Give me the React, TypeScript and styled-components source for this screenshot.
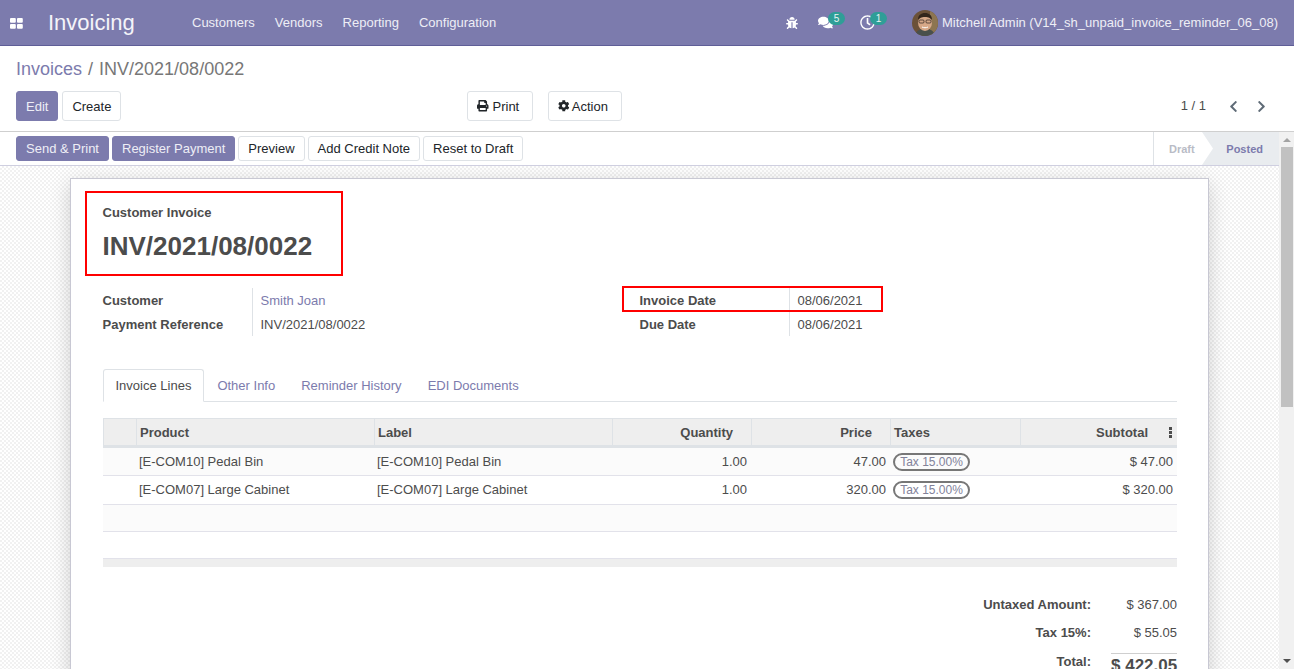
import React from "react";
import styled, { createGlobalStyle } from "styled-components";
import { FaBug, FaComments, FaRegClock, FaPrint, FaCog, FaChevronLeft, FaChevronRight } from "react-icons/fa";

const Global = createGlobalStyle`
  html, body { margin: 0; padding: 0; height: 100%; overflow: hidden; }
  body { font-family: "Liberation Sans", Arial, sans-serif; font-size: 13px; color: #4c4c4c; background: #fff; }
  * { box-sizing: border-box; }
`;

const Page = styled.div`
  display: flex; flex-direction: column; height: 669px; width: 1294px; overflow: hidden;
`;
const Navbar = styled.header`
  flex: none; height: 46px; background: #7c7bad; border-bottom: 1px solid #5f5e97;
  display: flex; align-items: center; color: #fff; padding-right: 16px;
`;
const AppsIcon = styled.svg`
  width: 13px; height: 11px; margin-left: 10px; margin-top: 1px; flex: none; fill: #fff;
`;
const Brand = styled.div`
  font-size: 22px; margin-left: 25px; width: 144px; flex: none; color: #f4f4f9; margin-top: 1px;
`;
const MenuLink = styled.a`
  font-size: 13px; margin-right: 20px; color: #eeeef6;
`;
const NavRight = styled.div`
  margin-left: auto; display: flex; align-items: center;
`;
const IconSlot = styled.span<{ $w: number }>`
  position: relative; display: flex; align-items: center; width: ${p => p.$w}px; color: #fff; font-size: 14px;
`;
const Badge = styled.span`
  position: absolute; left: 10px; top: -3px; height: 13px; min-width: 17px; padding: 0 5px;
  border-radius: 7px; background: #2f9e97; color: #e8f4f3; font-size: 10px; line-height: 13px; text-align: center;
`;
const Avatar = styled.svg`
  width: 26px; height: 26px; border-radius: 50%; flex: none; margin-right: 4px;
`;
const UserName = styled.span`
  font-size: 13px; color: #eeeef6; white-space: nowrap;
`;

const ControlPanel = styled.div`
  flex: none; height: 86px; border-bottom: 1px solid #cfcfcf; background: #fff;
  padding: 12px 16px 0; display: flex; flex-direction: column;
`;
const Crumbs = styled.div`
  font-size: 18px; line-height: 23px; color: #777; height: 33px; display: flex; gap: 6px;
`;
const CrumbLink = styled.a`
  color: #7c7bad;
`;
const CpRow = styled.div`
  display: flex; align-items: flex-start;
`;
const CpLeft = styled.div`
  width: 451px; display: flex; gap: 4px; flex: none;
`;
const CpMiddle = styled.div`
  display: flex; gap: 15px;
`;
const Btn = styled.button<{ $primary?: boolean; $small?: boolean; $caret?: boolean }>`
  font-family: inherit; font-size: 13px; height: ${p => (p.$small ? 25 : 30)}px;
  padding: 0 ${p => (p.$caret ? 13 : 9)}px 0 9px; border-radius: 3px;
  border: 1px solid ${p => (p.$primary ? "#7c7bad" : "#dee2e6")};
  background: ${p => (p.$primary ? "#7c7bad" : "#fff")};
  color: ${p => (p.$primary ? "#eeeef6" : "#212529")};
  display: inline-flex; align-items: center; gap: 4px; white-space: nowrap;
  svg { font-size: 11.5px; }
`;
const CogIcon = styled(FaCog)`
  margin-right: -2px;
`;
const Pager = styled.div`
  margin-left: auto; display: flex; align-items: center; height: 30px; color: #4c4c4c; padding-right: 10px;
  svg { font-size: 13px; color: #5f6b77; }
`;
const PagerText = styled.span`
  margin-right: 21px; margin-top: -2px;
`;
const PagerGap = styled.span`
  width: 15px;
`;

const Body = styled.div`
  flex: 1; display: flex; min-height: 0;
`;
const Content = styled.div`
  flex: 1; display: flex; flex-direction: column; min-width: 0;
`;
const Scrollbar = styled.div`
  width: 15px; flex: none; background: #f1f1f1; display: flex; flex-direction: column; align-items: center; padding-top: 6px;
`;
const ArrowUp = styled.span`
  width: 0; height: 0; border-left: 4px solid transparent; border-right: 4px solid transparent; border-bottom: 4px solid #a3a3a3;
`;
const ArrowDown = styled.span`
  width: 0; height: 0; border-left: 4px solid transparent; border-right: 4px solid transparent; border-top: 4px solid #505050; margin-top: auto; margin-bottom: 6px;
`;
const Thumb = styled.span`
  width: 12px; height: 260px; margin-top: 5px; background: #c1c1c1;
`;
const StatusBar = styled.div`
  flex: none; height: 34px; border-bottom: 1px solid #cfcfe0; background: #fff;
  display: flex; align-items: flex-start; padding-left: 16px;
`;
const StatusActions = styled.div`
  display: flex; gap: 3px; padding-top: 4px;
`;
const Steps = styled.div`
  margin-left: auto; display: flex; height: 33px; border-left: 1px solid #dee2e6;
  font-size: 11px; font-weight: 700;
`;
const StepDraft = styled.div`
  width: 48px; color: #b9bcc6; display: flex; align-items: center; padding-left: 15px;
`;
const StepPosted = styled.div`
  width: 77px; background: #e9ecef; color: #7c7bad; display: flex; align-items: center; justify-content: flex-end; padding-right: 16px;
  clip-path: polygon(0 0, 100% 0, 100% 100%, 0 100%, 11px 50%);
`;

const Main = styled.div`
  flex: 1; min-height: 0; overflow: hidden; padding-top: 12px;
  background-color: #fff;
  background-image: repeating-conic-gradient(#f1f1f1 0 25%, #fff 0 50%);
  background-size: 4px 4px;
`;
const Sheet = styled.div`
  position: relative; width: 1139px; margin-left: 70px; min-height: 560px; background: #fff;
  border: 1px solid #c8c8d3; padding: 26px 31px 0 31.5px;
  box-shadow: 0 5px 20px -1px rgba(0, 0, 0, 0.2);
`;
const Highlight = styled.div<{ $l: number; $t: number; $w: number; $h: number }>`
  position: absolute; left: ${p => p.$l}px; top: ${p => p.$t}px; width: ${p => p.$w}px; height: ${p => p.$h}px;
  border: 2px solid #f00; pointer-events: none;
`;
const TypeLabel = styled.div`
  font-size: 13px; font-weight: 700; line-height: 15px;
`;
const Title = styled.h1`
  font-size: 26px; font-weight: 700; line-height: 30px; margin: 11px 0 0; color: #4c4c4c;
`;
const Groups = styled.div`
  display: flex; margin-top: 27px;
`;
const Group = styled.div<{ $w: number }>`
  width: ${p => p.$w}px; flex: none; display: grid; grid-template-columns: 150px auto; grid-auto-rows: 24px; justify-content: start;
`;
const FieldLabel = styled.div`
  font-weight: 700; display: flex; align-items: center; border-right: 1px solid #dee2e6;
`;
const FieldValue = styled.div<{ $link?: boolean }>`
  display: flex; align-items: center; padding-left: 8px; color: ${p => (p.$link ? "#7c7bad" : "#4c4c4c")};
`;
const Tabs = styled.div`
  display: flex; margin-top: 33px; height: 33px; border-bottom: 1px solid #dee2e6;
`;
const Tab = styled.div<{ $active?: boolean }>`
  padding: 0 12px; height: 33px; display: flex; align-items: center; border: 1px solid ${p => (p.$active ? "#dee2e6" : "transparent")};
  border-bottom-color: ${p => (p.$active ? "#fff" : "transparent")}; border-radius: 3px 3px 0 0;
  color: ${p => (p.$active ? "#4c4c4c" : "#7c7bad")}; background: ${p => (p.$active ? "#fff" : "transparent")};
`;
const LinesTable = styled.div`
  margin-top: 16px; margin-left: 0.5px; display: flex; flex-direction: column;
`;
const columns = "33px 238px 238px 139px 139px 130px 157px";
const HeadRow = styled.div`
  display: grid; grid-template-columns: ${columns}; height: 30px; background: #eee;
  border-top: 1px solid #dee2e6; border-bottom: 3px solid #dee2e6; font-weight: 700;
`;
const HeadCell = styled.div<{ $right?: number }>`
  position: relative; display: flex; align-items: center; border-left: 1px solid #dee2e6;
  padding-left: 3px; justify-content: ${p => (p.$right !== undefined ? "flex-end" : "flex-start")};
  padding-right: ${p => p.$right ?? 0}px;
`;
const MoreDots = styled.svg`
  position: absolute; right: 5px; top: 8px; width: 3px; height: 11px; fill: #4c4c4c;
`;
const Row = styled.div<{ $bg?: boolean; $h: number; $pb?: number }>`
  display: grid; grid-template-columns: ${columns}; height: ${p => p.$h}px; background: ${p => (p.$bg ? "#fbfbfb" : "#fff")};
  border-bottom: 1px solid #e2e2ea; padding-bottom: ${p => p.$pb ?? 0}px;
`;
const Cell = styled.div<{ $right?: number }>`
  display: flex; align-items: center; padding-left: 3px; padding-right: ${p => p.$right ?? 0}px;
  justify-content: ${p => (p.$right !== undefined ? "flex-end" : "flex-start")};
`;
const TaxPill = styled.span`
  height: 18px; width: 77px; border: 2px solid #777; border-radius: 9px; font-size: 12px; line-height: 14px;
  color: #82829a; display: flex; align-items: center; justify-content: center;
`;
const FootBar = styled.div`
  height: 8px; background: #eee;
`;
const Totals = styled.div`
  margin-top: 26px; display: grid; grid-template-columns: 1fr 66px; column-gap: 20px; grid-template-rows: 28px 29px 30px; width: 300px; margin-left: auto;
`;
const TotalLabel = styled.div`
  font-weight: 700; text-align: right; line-height: 24px;
`;
const TotalValue = styled.div`
  text-align: right; line-height: 24px; white-space: nowrap;
`;
const GrandValue = styled.div`
  font-size: 17px; font-weight: 700; text-align: right; white-space: nowrap; border-top: 1px solid #cfcfcf; line-height: 24px; margin-top: 3px; height: 30px;
`;

export default function App() {
  return (
    <Page>
      <Global />
      <Navbar>
        <AppsIcon viewBox="0 0 13 11">
          <rect x="0" y="0" width="5.8" height="4.8" rx="1" />
          <rect x="7" y="0" width="5.8" height="4.8" rx="1" />
          <rect x="0" y="6" width="5.8" height="4.8" rx="1" />
          <rect x="7" y="6" width="5.8" height="4.8" rx="1" />
        </AppsIcon>
        <Brand>Invoicing</Brand>
        <MenuLink>Customers</MenuLink>
        <MenuLink>Vendors</MenuLink>
        <MenuLink>Reporting</MenuLink>
        <MenuLink>Configuration</MenuLink>
        <NavRight>
          <IconSlot $w={32}><FaBug size={12} /></IconSlot>
          <IconSlot $w={42}><FaComments size={15} /><Badge>5</Badge></IconSlot>
          <IconSlot $w={52}><FaRegClock size={15} /><Badge>1</Badge></IconSlot>
          <Avatar viewBox="0 0 26 26">
            <rect width="26" height="26" fill="#6b5138" />
            <rect x="18" y="0" width="8" height="26" fill="#8d7550" />
            <path d="M3 26c1-6 5-7 10-7s9 1 10 7z" fill="#49504c" />
            <ellipse cx="13" cy="12.5" rx="7" ry="8.5" fill="#d6a888" />
            <path d="M6 10c0-5 3-7 7-7s7 2 7 7c-2-2-3-3-7-3s-5 1-7 3z" fill="#33261c" />
            <rect x="7" y="10" width="5" height="3" rx="1" fill="none" stroke="#2b2320" strokeWidth="0.7" />
            <rect x="14" y="10" width="5" height="3" rx="1" fill="none" stroke="#2b2320" strokeWidth="0.7" />
            <path d="M10 17c2 1 4 1 6 0" fill="none" stroke="#fff" strokeWidth="1" />
          </Avatar>
          <UserName>Mitchell Admin (V14_sh_unpaid_invoice_reminder_06_08)</UserName>
        </NavRight>
      </Navbar>
      <ControlPanel>
        <Crumbs><CrumbLink>Invoices</CrumbLink><span>/</span><span>INV/2021/08/0022</span></Crumbs>
        <CpRow>
          <CpLeft>
            <Btn $primary>Edit</Btn>
            <Btn>Create</Btn>
          </CpLeft>
          <CpMiddle>
            <Btn $caret><FaPrint />Print</Btn>
            <Btn $caret><CogIcon />Action</Btn>
          </CpMiddle>
          <Pager>
            <PagerText>1 / 1</PagerText>
            <FaChevronLeft />
            <PagerGap />
            <FaChevronRight />
          </Pager>
        </CpRow>
      </ControlPanel>
      <Body>
        <Content>
          <StatusBar>
            <StatusActions>
              <Btn $primary $small>Send &amp; Print</Btn>
              <Btn $primary $small>Register Payment</Btn>
              <Btn $small>Preview</Btn>
              <Btn $small>Add Credit Note</Btn>
              <Btn $small>Reset to Draft</Btn>
            </StatusActions>
            <Steps>
              <StepDraft>Draft</StepDraft>
              <StepPosted>Posted</StepPosted>
            </Steps>
          </StatusBar>
          <Main>
            <Sheet>
              <Highlight $l={14} $t={12} $w={258} $h={85} />
              <Highlight $l={551} $t={107} $w={261} $h={26} />
              <TypeLabel>Customer Invoice</TypeLabel>
              <Title>INV/2021/08/0022</Title>
              <Groups>
                <Group $w={537}>
                  <FieldLabel>Customer</FieldLabel>
                  <FieldValue $link>Smith Joan</FieldValue>
                  <FieldLabel>Payment Reference</FieldLabel>
                  <FieldValue>INV/2021/08/0022</FieldValue>
                </Group>
                <Group $w={400}>
                  <FieldLabel>Invoice Date</FieldLabel>
                  <FieldValue>08/06/2021</FieldValue>
                  <FieldLabel>Due Date</FieldLabel>
                  <FieldValue>08/06/2021</FieldValue>
                </Group>
              </Groups>
              <Tabs>
                <Tab $active>Invoice Lines</Tab>
                <Tab>Other Info</Tab>
                <Tab>Reminder History</Tab>
                <Tab>EDI Documents</Tab>
              </Tabs>
              <LinesTable>
                <HeadRow>
                  <HeadCell />
                  <HeadCell>Product</HeadCell>
                  <HeadCell>Label</HeadCell>
                  <HeadCell $right={18}>Quantity</HeadCell>
                  <HeadCell $right={18}>Price</HeadCell>
                  <HeadCell>Taxes</HeadCell>
                  <HeadCell $right={29}>
                    Subtotal
                    <MoreDots viewBox="0 0 3 11">
                      <rect y="0" width="3" height="3" />
                      <rect y="4" width="3" height="3" />
                      <rect y="8" width="3" height="3" />
                    </MoreDots>
                  </HeadCell>
                </HeadRow>
                <Row $bg $h={28}>
                  <Cell />
                  <Cell>[E-COM10] Pedal Bin</Cell>
                  <Cell>[E-COM10] Pedal Bin</Cell>
                  <Cell $right={4}>1.00</Cell>
                  <Cell $right={4}>47.00</Cell>
                  <Cell><TaxPill>Tax 15.00%</TaxPill></Cell>
                  <Cell $right={4}>$ 47.00</Cell>
                </Row>
                <Row $h={29} $pb={1}>
                  <Cell />
                  <Cell>[E-COM07] Large Cabinet</Cell>
                  <Cell>[E-COM07] Large Cabinet</Cell>
                  <Cell $right={4}>1.00</Cell>
                  <Cell $right={4}>320.00</Cell>
                  <Cell><TaxPill>Tax 15.00%</TaxPill></Cell>
                  <Cell $right={4}>$ 320.00</Cell>
                </Row>
                <Row $bg $h={27} />
                <Row $h={27} />
                <FootBar />
              </LinesTable>
              <Totals>
                <TotalLabel>Untaxed Amount:</TotalLabel>
                <TotalValue>$ 367.00</TotalValue>
                <TotalLabel>Tax 15%:</TotalLabel>
                <TotalValue>$ 55.05</TotalValue>
                <TotalLabel>Total:</TotalLabel>
                <GrandValue>$ 422.05</GrandValue>
              </Totals>
            </Sheet>
          </Main>
        </Content>
        <Scrollbar>
          <ArrowUp />
          <Thumb />
          <ArrowDown />
        </Scrollbar>
      </Body>
    </Page>
  );
}
